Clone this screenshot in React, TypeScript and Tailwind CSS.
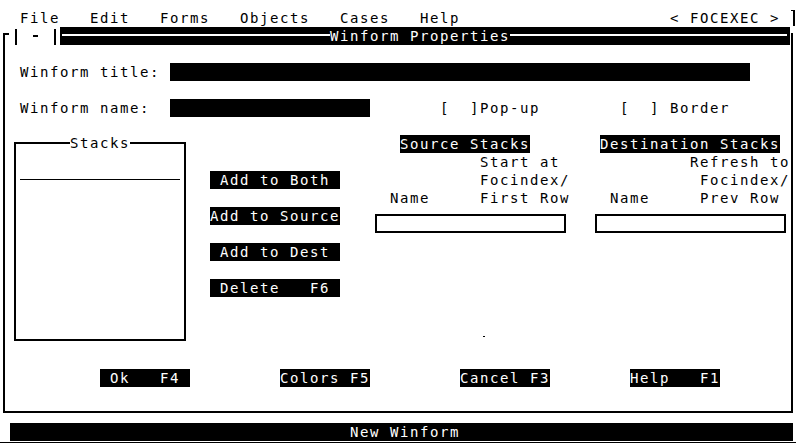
// Winform Properties — text-mode dialog, laid out on a 10px x 18px character grid
const INV = 'inline-block h-[18px] bg-black text-white align-top';

function Row({ children }: { children?: React.ReactNode }) {
  return <div className="h-[18px] whitespace-pre">{children}</div>;
}

function Inv({ text }: { text: string }) {
  return <span className={INV}>{text}</span>;
}

export default function App() {
  return (
    <div className="w-[796px] h-[444px] overflow-hidden bg-white pt-[9px] text-black font-['DejaVu_Sans_Mono','Liberation_Mono',monospace] text-[14px] leading-[18px] tracking-[1.572px]">
      {/* menu bar */}
      <div className="flex h-[18px] items-start">
        <span className="whitespace-pre">
          {'  File   Edit   Forms   Objects   Cases   Help                     < FOCEXEC >'}
        </span>
        <span className="ml-auto mr-[1px] mt-[1px] h-[16px] w-[4px] border-t border-r-2 border-black" />
      </div>

      {/* title bar */}
      <div className="flex h-[18px] items-start">
        <span className="ml-[3px] mt-[6px] h-[12px] w-[6px] border-l-2 border-t-2 border-black" />
        <span className="ml-[6px] mt-[2px] h-[16px] w-[2px] bg-black" />
        <span className="ml-[16px] mt-[8px] h-[2px] w-[5px] bg-black" />
        <span className="ml-[16px] mt-[2px] h-[16px] w-[2px] bg-black" />
        <div className="ml-[4px] flex h-[18px] w-[730px] items-start bg-black pl-[2px] pr-[3px]">
          <span className="mt-[7px] h-[2px] w-[268px] bg-white" />
          <span className="whitespace-pre text-white">Winform Properties</span>
          <span className="mt-[7px] h-[2px] flex-1 bg-white" />
        </div>
        <span className="ml-[1px] mt-[6px] h-[12px] w-[2px] bg-black" />
      </div>

      {/* dialog body */}
      <div className="ml-[3px] w-[790px] border-x-2 border-b-2 border-black pl-[5px] pb-[24px]">
        <Row />
        <Row>
          {' Winform title: '}
          <span className="inline-block h-[18px] w-[580px] bg-black align-top" />
        </Row>
        <Row />
        <Row>
          {' Winform name:  '}
          <span className="inline-block h-[18px] w-[200px] bg-black align-top" />
          {'       [  ]Pop-up        [  ] Border'}
        </Row>
        <Row />

        <div className="flex h-[234px] items-start">
          {/* Stacks list */}
          <div className="relative ml-[4px] mt-[7px] h-[199px] w-[172px] border-2 border-black">
            <span className="absolute left-[54px] top-[-10px] bg-white">Stacks</span>
            <div className="mx-[4px] mt-[35px] h-[1px] bg-black" />
          </div>

          {/* action buttons */}
          <div className="ml-[24px] mt-[36px] flex flex-col gap-[18px] whitespace-pre">
            <Inv text=" Add to Both " />
            <Inv text="Add to Source" />
            <Inv text=" Add to Dest " />
            <Inv text=" Delete   F6 " />
          </div>

          {/* source / destination */}
          <div className="ml-[30px] flex flex-col">
            <Row>
              {'   '}
              <Inv text="Source Stacks" />
              {'       '}
              <Inv text="Destination Stacks" />
            </Row>
            <Row>{'           Start at             Refresh to'}</Row>
            <Row>{'           Focindex/             Focindex/'}</Row>
            <Row>{'  Name     First Row    Name     Prev Row'}</Row>
            <div className="mt-[7px] flex">
              <div className="ml-[5px] h-[19px] w-[191px] border-2 border-black" />
              <div className="ml-[29px] h-[19px] w-[191px] border-2 border-black" />
            </div>
            <div className="ml-[113px] mt-[103px] h-[1px] w-[2px] bg-black" />
          </div>
        </div>

        <Row>
          {'         '}
          <Inv text=" Ok   F4 " />
          {'         '}
          <Inv text="Colors F5" />
          {'         '}
          <Inv text="Cancel F3" />
          {'        '}
          <Inv text="Help   F1" />
        </Row>
      </div>

      {/* status line */}
      <div className="ml-[10px] mt-[10px] h-[18px] w-[783px] whitespace-pre bg-black text-white">
        {'                                  New Winform'}
      </div>
      <div className="mt-[1px] h-[1px] w-full bg-black" />
    </div>
  );
}
